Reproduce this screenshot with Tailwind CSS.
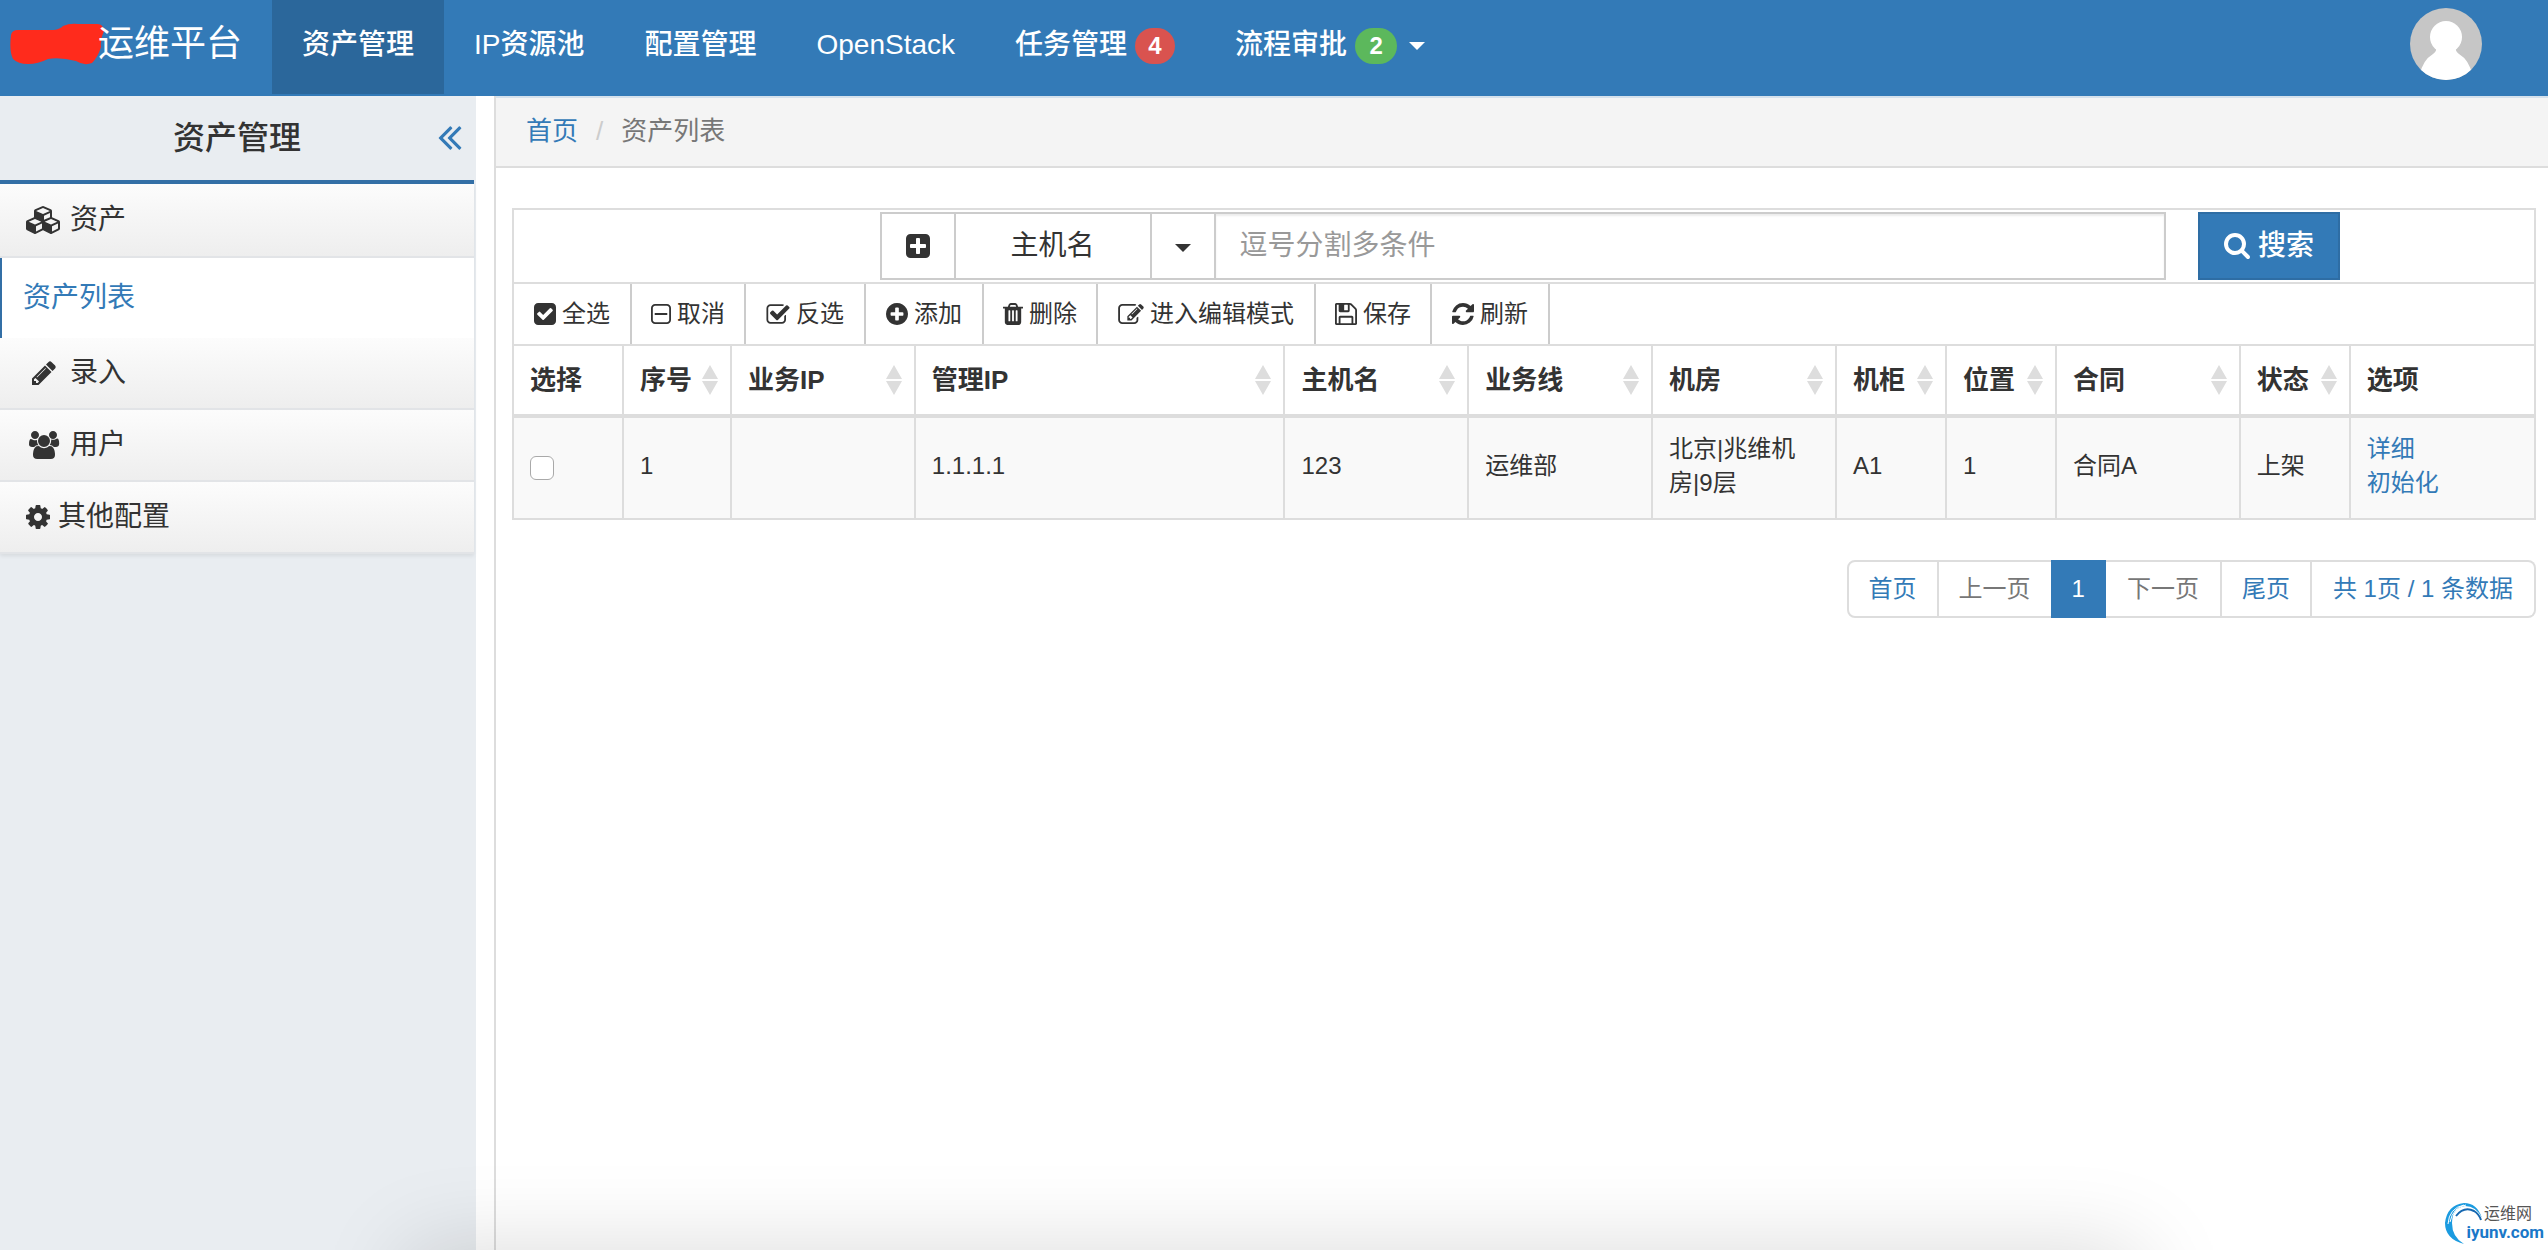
<!DOCTYPE html>
<html lang="zh-CN">
<head>
<meta charset="utf-8">
<meta name="viewport" content="width=device-width, initial-scale=1">
<title>资产列表 - 运维平台</title>
<script src="https://cdn.jsdelivr.net/npm/@tailwindcss/browser@4"></script>
</head>
<body class="relative flex min-h-screen flex-col overflow-x-hidden bg-white font-['Liberation_Sans','Noto_Sans_CJK_SC',sans-serif] text-[24px] leading-[34px] text-[#333]">

<header class="flex h-24 items-start bg-[#337ab7] pr-[66px] text-[28px] font-medium text-white">
  <a href="#" class="flex h-[88px] w-[272px] shrink-0 items-center pl-[10px] text-[36px] font-normal">
    <svg class="-mr-1.5 h-[42px] w-[94px] shrink-0" viewBox="0 0 94 42" aria-hidden="true"><path fill="#ff2b1c" d="M1 12Q2 7 8 7H44Q50 6 53 3Q60 0 68 1H86Q93 0 94 8Q90 16 91 24Q88 34 82 40Q74 43 66 38Q50 34 38 36Q28 41 18 41Q8 41 3 36Q-1 28 1 12Z"/></svg>
    <span>运维平台</span>
  </a>
  <nav class="flex whitespace-nowrap">
    <a href="#" class="flex h-[94px] items-center bg-[#2b679b] px-[30px] pb-1">资产管理</a>
    <a href="#" class="flex h-[94px] items-center px-[30px] pb-1">IP资源池</a>
    <a href="#" class="flex h-[94px] items-center px-[30px] pb-1">配置管理</a>
    <a href="#" class="flex h-[94px] items-center px-[30px] pb-1">OpenStack</a>
    <a href="#" class="flex h-[94px] items-center gap-2 px-[30px] pb-1">任务管理 <span class="mt-0.5 flex h-9 w-10 items-center justify-center rounded-full bg-[#d9534f] text-[24px] font-bold">4</span></a>
    <button type="button" class="flex h-[94px] items-center gap-2 px-[30px] pb-1">流程审批 <span class="mt-0.5 flex h-9 w-[42px] items-center justify-center rounded-full bg-[#5cb85c] text-[24px] font-bold">2</span>
      <svg class="mt-0.5 ml-1 h-2 w-4" viewBox="0 0 16 8" fill="currentColor" aria-hidden="true"><path d="M0 0h16L8 8z"/></svg></button>
  </nav>
  <a href="#" class="mt-2 ml-auto size-[72px] overflow-hidden rounded-full bg-[#c6c6c6]" aria-label="用户">
    <svg class="size-full" viewBox="0 0 72 72" fill="#fff"><circle cx="36" cy="29" r="16"/><path d="M26 40h20q-1 3 3 6 10 6 13 20v6H10v-6q3-14 13-20 4-3 3-6z"/></svg>
  </a>
</header>

<div class="flex grow">
  <aside class="w-[476px] shrink-0 bg-[#e9edf1] text-[28px] leading-[40px]">
    <div class="relative mr-0.5 flex h-[88px] items-center justify-center border-b-4 border-[#336fa6]">
      <h2 class="text-[32px] font-medium">资产管理</h2>
      <button type="button" class="absolute right-3 flex text-[#337ab7]" aria-label="收起">
        <svg class="h-6 w-6" viewBox="400 448 1024 1024" fill="currentColor"><path d="M1011 1376q0 13-10 23l-50 50q-10 10-23 10t-23-10l-466-466q-10-10-10-23t10-23l466-466q10-10 23-10t23 10l50 50q10 10 10 23t-10 23l-393 393 393 393q10 10 10 23zm384 0q0 13-10 23l-50 50q-10 10-23 10t-23-10l-466-466q-10-10-10-23t10-23l466-466q10-10 23-10t23 10l50 50q10 10 10 23t-10 23l-393 393 393 393q10 10 10 23z"/></svg>
      </button>
    </div>
    <nav class="mr-0.5 flex flex-col shadow-[0_2px_4px_rgba(0,0,0,0.08)]">
      <a href="#" class="flex h-[74px] items-center gap-2 border-b-2 border-[#e2e4e7] bg-linear-to-b from-[#fcfcfc] to-[#eee] pl-[26px]">
        <svg class="h-7 w-9" viewBox="0 0 2304 1792" fill="currentColor" aria-hidden="true"><path d="M640 1632l384-192v-314l-384 164v342zm-64-454l404-173-404-173-404 173zm1088 454l384-192v-314l-384 164v342zm-64-454l404-173-404-173-404 173zm-448-293l384-165v-266l-384 164v267zm-64-379l441-189-441-189-441 189zm1088 518v416q0 36-19 67t-52 47l-448 224q-25 14-57 14t-57-14l-448-224q-4-2-7-4-2 2-7 4l-448 224q-25 14-57 14t-57-14l-448-224q-33-16-52-47t-19-67v-416q0-38 21.5-70t56.5-48l434-186v-400q0-38 21.5-70t56.5-48l448-192q23-10 50-10t50 10l448 192q35 16 56.5 48t21.5 70v400l434 186q36 16 57 48t21 70z"/></svg>
        资产
      </a>
      <a href="#" class="flex h-20 items-center border-l-2 border-[#336fa6] bg-white pl-[21px] text-[#337ab7]">资产列表</a>
      <a href="#" class="flex h-[72px] items-center gap-2 border-b-2 border-[#e2e4e7] bg-linear-to-b from-[#fcfcfc] to-[#eee] pl-[26px]">
        <svg class="h-7 w-9" viewBox="0 0 1792 1792" fill="currentColor" aria-hidden="true"><path d="M491 1536l91-91-235-235-91 91v107h128v128h107zm523-928q0-22-22-22-10 0-17 7l-542 542q-7 7-7 17 0 22 22 22 10 0 17-7l542-542q7-7 7-17zm-54-192l416 416-832 832h-416v-416zm683 96q0 53-37 90l-166 166-416-416 166-165q36-38 90-38 53 0 91 38l235 234q37 39 37 91z"/></svg>
        录入
      </a>
      <a href="#" class="flex h-[72px] items-center gap-2 border-b-2 border-[#e2e4e7] bg-linear-to-b from-[#fcfcfc] to-[#eee] pl-[26px]">
        <svg class="h-7 w-9" viewBox="0 0 1920 1792" fill="currentColor" aria-hidden="true"><path d="M593 896q-162 5-265 128h-134q-82 0-138-40.5t-56-118.5q0-353 124-353 6 0 43.5 21t97.5 42.5 119 21.5q67 0 133-23-5 37-5 66 0 159 93 290zm1071 637q0 120-73 189.5t-194 69.5h-874q-121 0-194-69.5t-73-189.5q0-53 3.5-103.5t14-109 26.5-108.5 43-97.5 62-81 85.5-53.5 111.5-20q10 0 43 21.5t73 48 107 48 135 21.5 135-21.5 107-48 73-48 43-21.5q61 0 111.5 20t85.5 53.5 62 81 43 97.5 26.5 108.5 14 109 3.5 103.5zm-1024-1277q0 106-75 181t-181 75-181-75-75-181 75-181 181-75 181 75 75 181zm704 384q0 159-112.5 271.5t-271.5 112.5-271.5-112.5-112.5-271.5 112.5-271.5 271.5-112.5 271.5 112.5 112.5 271.5zm576 225q0 78-56 118.5t-138 40.5h-134q-103-123-265-128 93-131 93-290 0-29-5-66 66 23 133 23 59 0 119-21.5t97.5-42.5 43.5-21q124 0 124 353zm-128-609q0 106-75 181t-181 75-181-75-75-181 75-181 181-75 181 75 75 181z"/></svg>
        用户
      </a>
      <a href="#" class="flex h-[72px] items-center gap-2 border-b-2 border-[#e2e4e7] bg-linear-to-b from-[#fcfcfc] to-[#eee] pl-[26px]">
        <svg class="size-6" viewBox="128 128 1536 1536" fill="currentColor" aria-hidden="true"><path d="M1152 896q0-106-75-181t-181-75-181 75-75 181 75 181 181 75 181-75 75-181zm512-109v222q0 12-8 23t-20 13l-185 28q-19 54-39 91 35 50 107 138 10 12 10 25t-9 23q-27 37-99 108t-94 71q-12 0-26-9l-138-108q-44 23-91 38-16 136-29 186-7 28-36 28h-222q-14 0-24.5-8.5t-11.5-21.5l-28-184q-49-16-90-37l-141 107q-10 9-25 9-14 0-25-11-126-114-165-168-7-10-7-23 0-12 8-23 15-21 51-66.5t54-70.5q-27-50-41-99l-183-27q-13-2-21-12.5t-8-23.5v-222q0-12 8-23t19-13l186-28q14-46 39-92-40-57-107-138-10-12-10-24 0-10 9-23 26-36 98.5-107.5t94.5-71.5q13 0 26 10l138 107q44-23 91-38 16-136 29-186 7-28 36-28h222q14 0 24.5 8.5t11.5 21.5l28 184q49 16 90 37l142-107q9-9 24-9 13 0 25 10 129 119 165 170 7 8 7 22 0 12-8 23-15 21-51 66.5t-54 70.5q26 50 41 98l183 28q13 2 21 12.5t8 23.5z"/></svg>
        其他配置
      </a>
    </nav>
  </aside>

  <main class="ml-[18px] min-w-0 grow border-l-2 border-[#ddd]">
    <nav class="flex h-[72px] items-center gap-[18px] border-t-2 border-b-2 border-t-[#d5e1ec] border-b-[#ddd] bg-[#f4f4f4] pb-0.5 pl-[30px] text-[26px]" aria-label="路径">
      <a href="#" class="text-[#337ab7]">首页</a>
      <span class="text-[#ccc]">/</span>
      <span class="text-[#777]">资产列表</span>
    </nav>

    <div class="pt-10 pr-3 pl-4">
      <section class="border-2 border-[#ddd]">
        <form class="flex border-b-2 border-[#ddd] py-0.5 pl-[18.1%] text-[28px]">
          <div class="flex h-[68px] grow border-2 border-[#ccc]">
            <button type="button" class="flex w-[74px] shrink-0 items-center justify-center border-r-2 border-[#ccc]" aria-label="添加条件">
              <svg class="size-6" viewBox="128 128 1536 1536" fill="currentColor"><path d="M1408 960v-128q0-26-19-45t-45-19h-320v-320q0-26-19-45t-45-19h-128q-26 0-45 19t-19 45v320h-320q-26 0-45 19t-19 45v128q0 26 19 45t45 19h320v320q0 26 19 45t45 19h128q26 0 45-19t19-45v-320h320q26 0 45-19t19-45zm256-544v960q0 119-84.5 203.5t-203.5 84.5h-960q-119 0-203.5-84.5t-84.5-203.5v-960q0-119 84.5-203.5t203.5-84.5h960q119 0 203.5 84.5t84.5 203.5z"/></svg>
            </button>
            <button type="button" class="w-[196px] shrink-0 border-r-2 border-[#ccc]">主机名</button>
            <button type="button" class="flex w-16 shrink-0 items-center justify-center border-r-2 border-[#ccc]" aria-label="选择字段">
              <svg class="mt-1 h-2 w-4" viewBox="0 0 16 8" fill="currentColor"><path d="M0 0h16L8 8z"/></svg>
            </button>
            <input type="text" aria-label="搜索条件" placeholder="逗号分割多条件" class="min-w-0 grow px-6 shadow-[inset_0_2px_2px_rgba(0,0,0,0.075)] outline-none placeholder:text-[#999]">
          </div>
          <button type="button" class="mr-[194px] ml-8 flex w-[142px] shrink-0 items-center justify-center gap-2 border-2 border-[#2e6da4] bg-[#337ab7] font-medium text-white">
            <svg class="size-[26px]" viewBox="64 128 1664 1664" fill="currentColor" aria-hidden="true"><path d="M1216 832q0-185-131.5-316.5t-316.5-131.5-316.5 131.5-131.5 316.5 131.5 316.5 316.5 131.5 316.5-131.5 131.5-316.5zm512 832q0 52-38 90t-90 38q-54 0-90-38l-343-342q-179 124-399 124-143 0-273.5-55.5t-225-150-150-225-55.5-273.5 55.5-273.5 150-225 225-150 273.5-55.5 273.5 55.5 225 150 150 225 55.5 273.5q0 220-124 399l343 343q37 37 37 90z"/></svg>
            搜索
          </button>
        </form>

        <div class="flex h-[62px] border-b-2 border-[#ddd] whitespace-nowrap">
          <button type="button" class="flex items-center gap-1.5 border-r-2 border-[#ccc] px-5">
            <svg class="size-[22px]" viewBox="128 128 1536 1536" fill="currentColor" aria-hidden="true"><path d="M813 1299l614-614q19-19 19-45t-19-45l-102-102q-19-19-45-19t-45 19l-467 467-211-211q-19-19-45-19t-45 19l-102 102q-19 19-19 45t19 45l358 358q19 19 45 19t45-19zm851-883v960q0 119-84.5 203.5t-203.5 84.5h-960q-119 0-203.5-84.5t-84.5-203.5v-960q0-119 84.5-203.5t203.5-84.5h960q119 0 203.5 84.5t84.5 203.5z"/></svg>
            全选
          </button>
          <button type="button" class="flex items-center gap-1.5 border-r-2 border-[#ccc] px-[19px]">
            <svg class="size-5" viewBox="192 128 1408 1408" fill="currentColor" aria-hidden="true"><path d="M1344 800v64q0 14-9 23t-23 9h-832q-14 0-23-9t-9-23v-64q0-14 9-23t23-9h832q14 0 23 9t9 23zm128 448v-832q0-66-47-113t-113-47h-832q-66 0-113 47t-47 113v832q0 66 47 113t113 47h832q66 0 113-47t47-113zm128-832v832q0 119-84.5 203.5t-203.5 84.5h-832q-119 0-203.5-84.5t-84.5-203.5v-832q0-119 84.5-203.5t203.5-84.5h832q119 0 203.5 84.5t84.5 203.5z"/></svg>
            取消
          </button>
          <button type="button" class="flex items-center gap-1.5 border-r-2 border-[#ccc] px-5">
            <svg class="size-6" viewBox="32 0 1728 1664" fill="currentColor" aria-hidden="true"><path d="M1472 930v318q0 119-84.5 203.5t-203.5 84.5h-832q-119 0-203.5-84.5t-84.5-203.5v-832q0-119 84.5-203.5t203.5-84.5h832q63 0 117 25 15 7 18 23 3 17-9 29l-49 49q-10 10-23 10-3 0-9-2-23-6-45-6h-832q-66 0-113 47t-47 113v832q0 66 47 113t113 47h832q66 0 113-47t47-113v-254q0-13 9-22l64-64q10-10 23-10 6 0 12 3 20 8 20 29zm231-489l-814 814q-24 24-57 24t-57-24l-430-430q-24-24-24-57t24-57l110-110q24-24 57-24t57 24l263 263 647-647q24-24 57-24t57 24l110 110q24 24 24 57t-24 57z"/></svg>
            反选
          </button>
          <button type="button" class="flex items-center gap-1.5 border-r-2 border-[#ccc] px-5">
            <svg class="size-[22px]" viewBox="128 128 1536 1536" fill="currentColor" aria-hidden="true"><path d="M1344 960v-128q0-26-19-45t-45-19h-256v-256q0-26-19-45t-45-19h-128q-26 0-45 19t-19 45v256h-256q-26 0-45 19t-19 45v128q0 26 19 45t45 19h256v256q0 26 19 45t45 19h128q26 0 45-19t19-45v-256h256q26 0 45-19t19-45zm320-64q0 209-103 385.5t-279.5 279.5-385.5 103-385.5-103-279.5-279.5-103-385.5 103-385.5 279.5-279.5 385.5-103 385.5 103 279.5 279.5 103 385.5z"/></svg>
            添加
          </button>
          <button type="button" class="flex items-center gap-1.5 border-r-2 border-[#ccc] px-[19px]">
            <svg class="h-[22px] w-5" viewBox="192 128 1408 1536" fill="currentColor" aria-hidden="true"><path d="M704 1376v-704q0-14-9-23t-23-9h-64q-14 0-23 9t-9 23v704q0 14 9 23t23 9h64q14 0 23-9t9-23zm256 0v-704q0-14-9-23t-23-9h-64q-14 0-23 9t-9 23v704q0 14 9 23t23 9h64q14 0 23-9t9-23zm256 0v-704q0-14-9-23t-23-9h-64q-14 0-23 9t-9 23v704q0 14 9 23t23 9h64q14 0 23-9t9-23zm-544-992h448l-48-117q-7-9-17-11h-317q-10 2-17 11zm928 32v64q0 14-9 23t-23 9h-96v948q0 83-47 143.5t-113 60.5h-832q-66 0-113-58.5t-47-141.5v-952h-96q-14 0-23-9t-9-23v-64q0-14 9-23t23-9h309l70-167q15-37 54-63t79-26h320q40 0 79 26t54 63l70 167h309q14 0 23 9t9 23z"/></svg>
            删除
          </button>
          <button type="button" class="flex items-center gap-1.5 border-r-2 border-[#ccc] px-5">
            <svg class="h-[22px] w-[26px]" viewBox="0 64 1792 1536" fill="currentColor" aria-hidden="true"><path d="M888 1184l116-116-152-152-116 116v56h96v96h56zm440-720q-16-16-33 1l-350 350q-17 17-1 33t33-1l350-350q17-17 1-33zm80 594v190q0 119-84.5 203.5t-203.5 84.5h-832q-119 0-203.5-84.5t-84.5-203.5v-832q0-119 84.5-203.5t203.5-84.5h832q63 0 117 25 15 7 18 23 3 17-9 29l-49 49q-14 14-32 8-23-6-45-6h-832q-66 0-113 47t-47 113v832q0 66 47 113t113 47h832q66 0 113-47t47-113v-126q0-13 9-22l64-64q15-15 35-7t20 29zm-96-738l288 288-672 672h-288v-288zm444 132l-92 92-288-288 92-92q28-28 68-28t68 28l152 152q28 28 28 68t-28 68z"/></svg>
            进入编辑模式
          </button>
          <button type="button" class="flex items-center gap-1.5 border-r-2 border-[#ccc] px-[19px]">
            <svg class="size-[22px]" viewBox="128 128 1536 1536" fill="currentColor" aria-hidden="true"><path d="M512 1536h768v-384h-768v384zm896 0h128v-896q0-14-10-38.5t-20-34.5l-281-281q-10-10-34-20t-39-10v416q0 40-28 68t-68 28h-576q-40 0-68-28t-28-68v-416h-128v1280h128v-416q0-40 28-68t68-28h832q40 0 68 28t28 68v416zm-384-928v-320q0-13-9.5-22.5t-22.5-9.5h-192q-13 0-22.5 9.5t-9.5 22.5v320q0 13 9.5 22.5t22.5 9.5h192q13 0 22.5-9.5t9.5-22.5zm640 32v928q0 40-28 68t-68 28h-1344q-40 0-68-28t-28-68v-1344q0-40 28-68t68-28h928q40 0 88 20t76 48l280 280q28 28 48 76t20 88z"/></svg>
            保存
          </button>
          <button type="button" class="flex items-center gap-1.5 border-r-2 border-[#ccc] px-5">
            <svg class="size-[22px]" viewBox="128 128 1536 1536" fill="currentColor" aria-hidden="true"><path d="M1639 1056q0 5-1 7-64 268-268 434.5t-478 166.5q-146 0-282.5-55t-243.5-157l-129 129q-19 19-45 19t-45-19-19-45v-448q0-26 19-45t45-19h448q26 0 45 19t19 45-19 45l-137 137q71 66 161 102t187 36q134 0 250-65t186-179q11-17 53-117 8-23 30-23h192q13 0 22.5 9.5t9.5 22.5zm25-800v448q0 26-19 45t-45 19h-448q-26 0-45-19t-19-45 19-45l138-138q-148-137-349-137-134 0-250 65t-186 179q-11 17-53 117-8 23-30 23h-199q-13 0-22.5-9.5t-9.5-22.5v-7q65-268 270-434.5t480-166.5q146 0 284 55.5t245 156.5l130-129q19-19 45-19t45 19 19 45z"/></svg>
            刷新
          </button>
        </div>

        <table class="w-full table-fixed border-separate border-spacing-0 text-left">
          <colgroup>
            <col class="w-[108px]"><col class="w-[108px]"><col class="w-[9.1%]"><col class="w-[18.3%]"><col class="w-[9.1%]"><col class="w-[9.1%]"><col class="w-[9.1%]"><col class="w-[110px]"><col class="w-[110px]"><col class="w-[9.1%]"><col class="w-[110px]"><col>
          </colgroup>
          <thead class="text-[26px] whitespace-nowrap">
            <tr class="h-[72px]">
              <th class="border-b-4 border-[#ddd] px-4">选择</th>
              <th class="border-b-4 border-l-2 border-[#ddd] pr-3 pl-4"><div class="flex items-center justify-between">序号<svg class="h-[30px] w-4" viewBox="0 0 16 30" fill="#ddd" aria-hidden="true"><path d="M8 0l8 14H0zM8 30l8-14H0z"/></svg></div></th>
              <th class="border-b-4 border-l-2 border-[#ddd] pr-3 pl-4"><div class="flex items-center justify-between">业务IP<svg class="h-[30px] w-4" viewBox="0 0 16 30" fill="#ddd" aria-hidden="true"><path d="M8 0l8 14H0zM8 30l8-14H0z"/></svg></div></th>
              <th class="border-b-4 border-l-2 border-[#ddd] pr-3 pl-4"><div class="flex items-center justify-between">管理IP<svg class="h-[30px] w-4" viewBox="0 0 16 30" fill="#ddd" aria-hidden="true"><path d="M8 0l8 14H0zM8 30l8-14H0z"/></svg></div></th>
              <th class="border-b-4 border-l-2 border-[#ddd] pr-3 pl-4"><div class="flex items-center justify-between">主机名<svg class="h-[30px] w-4" viewBox="0 0 16 30" fill="#ddd" aria-hidden="true"><path d="M8 0l8 14H0zM8 30l8-14H0z"/></svg></div></th>
              <th class="border-b-4 border-l-2 border-[#ddd] pr-3 pl-4"><div class="flex items-center justify-between">业务线<svg class="h-[30px] w-4" viewBox="0 0 16 30" fill="#ddd" aria-hidden="true"><path d="M8 0l8 14H0zM8 30l8-14H0z"/></svg></div></th>
              <th class="border-b-4 border-l-2 border-[#ddd] pr-3 pl-4"><div class="flex items-center justify-between">机房<svg class="h-[30px] w-4" viewBox="0 0 16 30" fill="#ddd" aria-hidden="true"><path d="M8 0l8 14H0zM8 30l8-14H0z"/></svg></div></th>
              <th class="border-b-4 border-l-2 border-[#ddd] pr-3 pl-4"><div class="flex items-center justify-between">机柜<svg class="h-[30px] w-4" viewBox="0 0 16 30" fill="#ddd" aria-hidden="true"><path d="M8 0l8 14H0zM8 30l8-14H0z"/></svg></div></th>
              <th class="border-b-4 border-l-2 border-[#ddd] pr-3 pl-4"><div class="flex items-center justify-between">位置<svg class="h-[30px] w-4" viewBox="0 0 16 30" fill="#ddd" aria-hidden="true"><path d="M8 0l8 14H0zM8 30l8-14H0z"/></svg></div></th>
              <th class="border-b-4 border-l-2 border-[#ddd] pr-3 pl-4"><div class="flex items-center justify-between">合同<svg class="h-[30px] w-4" viewBox="0 0 16 30" fill="#ddd" aria-hidden="true"><path d="M8 0l8 14H0zM8 30l8-14H0z"/></svg></div></th>
              <th class="border-b-4 border-l-2 border-[#ddd] pr-3 pl-4"><div class="flex items-center justify-between">状态<svg class="h-[30px] w-4" viewBox="0 0 16 30" fill="#ddd" aria-hidden="true"><path d="M8 0l8 14H0zM8 30l8-14H0z"/></svg></div></th>
              <th class="border-b-4 border-l-2 border-[#ddd] px-4">选项</th>
            </tr>
          </thead>
          <tbody>
            <tr class="h-[100px] bg-[#f9f9f9]">
              <td class="px-4"><input type="checkbox" aria-label="选择 1.1.1.1" class="block size-6 appearance-none rounded-md border border-[#a9a9a9] bg-white"></td>
              <td class="border-l-2 border-[#ddd] px-4 pb-1">1</td>
              <td class="border-l-2 border-[#ddd] px-4 pb-1"></td>
              <td class="border-l-2 border-[#ddd] px-4 pb-1">1.1.1.1</td>
              <td class="border-l-2 border-[#ddd] px-4 pb-1">123</td>
              <td class="border-l-2 border-[#ddd] px-4 pb-1">运维部</td>
              <td class="border-l-2 border-[#ddd] px-4 pb-1">北京|兆维机房|9层</td>
              <td class="border-l-2 border-[#ddd] px-4 pb-1">A1</td>
              <td class="border-l-2 border-[#ddd] px-4 pb-1">1</td>
              <td class="border-l-2 border-[#ddd] px-4 pb-1">合同A</td>
              <td class="border-l-2 border-[#ddd] px-4 pb-1">上架</td>
              <td class="border-l-2 border-[#ddd] px-4 pb-1 text-[#337ab7]"><a href="#" class="block">详细</a><a href="#" class="block">初始化</a></td>
            </tr>
          </tbody>
        </table>
      </section>

      <nav class="mt-10 flex justify-end" aria-label="分页">
        <ul class="flex h-[58px] whitespace-nowrap text-[#337ab7]">
          <li class="flex rounded-l-lg border-2 border-[#ddd]"><a href="#" class="flex items-center px-5">首页</a></li>
          <li class="flex border-y-2 border-[#ddd] text-[#777]"><a href="#" class="flex items-center px-5">上一页</a></li>
          <li class="flex bg-[#337ab7] text-white"><a href="#" aria-current="page" class="flex items-center px-[21px]">1</a></li>
          <li class="flex border-y-2 border-[#ddd] text-[#777]"><a href="#" class="flex items-center px-[21px]">下一页</a></li>
          <li class="flex border-2 border-[#ddd]"><a href="#" class="flex items-center px-5">尾页</a></li>
          <li class="flex rounded-r-lg border-2 border-l-0 border-[#ddd]"><a href="#" class="flex items-center px-[21px]">共 1页 / 1 条数据</a></li>
        </ul>
      </nav>
    </div>
  </main>
</div>

<!-- soft shade along the bottom edge of the window -->
<div class="pointer-events-none absolute inset-x-0 bottom-0 h-28 overflow-hidden">
  <div class="absolute top-full right-[16%] left-[16%] h-40 shadow-[0_0_90px_rgba(0,0,0,0.15)]"></div>
</div>

<!-- site mark -->
<a href="#" class="absolute right-1 bottom-1 flex h-11 w-[100px] flex-col items-end">
  <svg class="absolute top-0 left-0 h-11 w-10" viewBox="0 0 40 44" fill="none" aria-hidden="true"><path fill="#1b9be0" d="M20 42Q1 37 1 21 3 3 20 1 33 1 38 16 32 4 21 4 8 6 8 21 8 35 20 42Z"/><path stroke="#fff" stroke-width="1" d="M4 22Q5 6 20 3M6 20Q9 5 22 3"/><path stroke="#1567b0" stroke-width="2" d="M12 14Q20 4 30 9 35 12 37 18"/></svg>
  <span class="mr-3 h-5 text-[16px] leading-6 text-[#555]">运维网</span>
  <span class="relative font-[Roboto,sans-serif] text-[17px] leading-5 font-bold text-[#1a78c8]">iyunv.com</span>
</a>
</body>
</html>
